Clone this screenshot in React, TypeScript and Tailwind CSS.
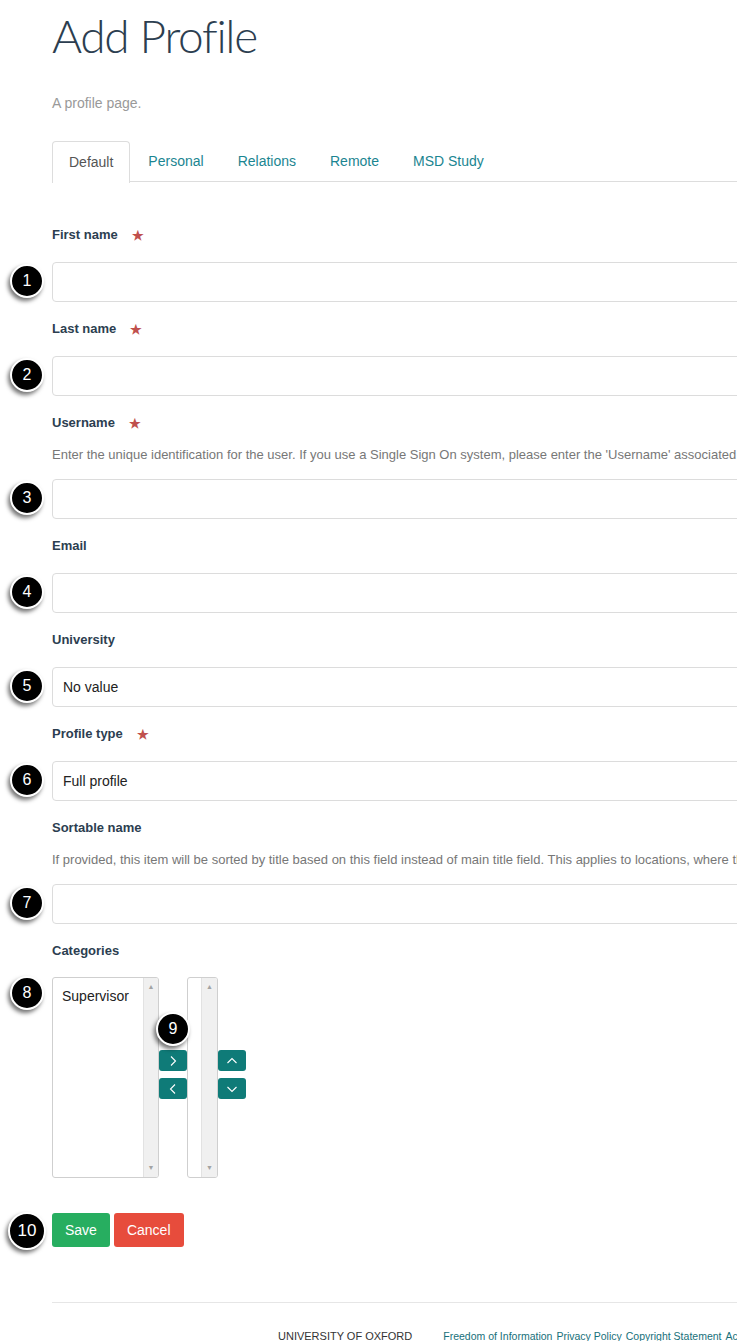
import React from 'react';

const arial = { fontFamily: '"Liberation Sans", Arial, sans-serif' };

const Callout: React.FC<{ n: string; className?: string; big?: boolean }> = ({ n, className = '', big }) => (
  <div
    className={`absolute flex items-center justify-center rounded-full bg-black border-2 border-white text-white shadow-[-2px_3px_4px_rgba(0,0,0,0.55)] ${big ? 'w-[38px] h-[38px] text-[17px]' : 'w-[34px] h-[34px] text-[16px]'} ${className}`}
  >
    {n}
  </div>
);

const Star = () => <span className="ml-[14px] text-[#c0504d] text-[13px] relative top-[1px]">★</span>;

interface FieldProps {
  label: string;
  required?: boolean;
  help?: string;
  callout: string;
  value?: string;
}

const Field: React.FC<FieldProps> = ({ label, required, help, callout, value }) => (
  <div className="mb-[17px]">
    <div className={`h-[20px] flex items-center text-[13px] font-bold text-[#2c3e50] ${help ? 'mb-[12px]' : 'mb-[17px]'}`}>
      {label}
      {required && <Star />}
    </div>
    {help && <div className="h-[20px] leading-[20px] mb-[14px] text-[13px] text-[#777] whitespace-nowrap">{help}</div>}
    <div className="relative">
      <Callout n={callout} className="left-[-42px] top-[2px]" />
      <div className="h-[40px] w-[900px] border border-[#dcdcdc] rounded-[4px] flex items-center px-[10px] text-[14px] text-[#222]">
        {value}
      </div>
    </div>
  </div>
);

const ScrollTrack: React.FC<{ w: string }> = ({ w }) => (
  <div className={`${w} h-full bg-[#f0f0f0] border-l border-[#e2e2e2] flex flex-col justify-between items-center py-[4px] text-[7px] text-[#a3a3a3]`}>
    <span>▲</span>
    <span>▼</span>
  </div>
);

const TealBtn: React.FC<{ d: string }> = ({ d }) => (
  <div className="w-[28px] h-[21px] bg-[#0f7b78] rounded-[3px] flex items-center justify-center">
    <svg width="12" height="12" viewBox="0 0 12 12" fill="none" stroke="white" strokeWidth="1.1">
      <path d={d} />
    </svg>
  </div>
);

export default function App() {
  const tabs = ['Default', 'Personal', 'Relations', 'Remote', 'MSD Study'];
  return (
    <div className="w-[737px] h-[1341px] overflow-hidden bg-white" style={arial}>
      <div className="w-[1100px] pl-[52px]">
        <h1 className="pt-[6px] h-[66px] text-[46px] leading-[60px] font-light text-[#2c3e50] tracking-[-1.3px]" style={{ fontFamily: 'Lato, "Open Sans", sans-serif' }}>
          Add Profile
        </h1>
        <p className="mt-[27px] text-[14px] leading-[20px] text-[#999]">A profile page.</p>

        <div className="mt-[27px] flex border-b border-[#dddddd] h-[42px]">
          {tabs.map((t, i) => (
            <div
              key={t}
              className={`mr-[2px] px-[16px] h-[42px] flex items-center text-[14px] rounded-t-[4px] ${i === 0 ? 'border border-b-0 border-[#dddddd] bg-white text-[#555] relative top-[1px]' : 'text-[#1b8591]'}`}
            >
              {t}
            </div>
          ))}
        </div>

        <div className="mt-[43px]">
          <Field label="First name" required callout="1" />
          <Field label="Last name" required callout="2" />
          <Field
            label="Username"
            required
            callout="3"
            help="Enter the unique identification for the user. If you use a Single Sign On system, please enter the 'Username' associated with this user in that system."
          />
          <Field label="Email" callout="4" />
          <Field label="University" callout="5" value="No value" />
          <Field label="Profile type" required callout="6" value="Full profile" />
          <Field
            label="Sortable name"
            callout="7"
            help="If provided, this item will be sorted by title based on this field instead of main title field. This applies to locations, where the title may not be the best way to sort."
          />

          <div className="h-[20px] flex items-center text-[13px] font-bold text-[#2c3e50] mb-[16px]">Categories</div>
          <div className="relative flex items-start">
            <Callout n="8" className="left-[-42px] top-[-1px]" />
            <div className="w-[107px] h-[201px] border border-[#cfcfcf] rounded-[3px] flex overflow-hidden">
              <div className="flex-1 pl-[9px] pt-[8px] text-[14px] text-[#222]">Supervisor</div>
              <ScrollTrack w="w-[15px]" />
            </div>
            <div className="flex flex-col gap-[7px] mt-[73px]">
              <TealBtn d="M4 1.5 L8.5 6 L4 10.5" />
              <TealBtn d="M8 1.5 L3.5 6 L8 10.5" />
            </div>
            <div className="w-[31px] h-[201px] border border-[#cfcfcf] rounded-[3px] flex overflow-hidden">
              <div className="flex-1" />
              <ScrollTrack w="w-[16px]" />
            </div>
            <div className="flex flex-col gap-[7px] mt-[73px]">
              <TealBtn d="M1.5 8 L6 3.5 L10.5 8" />
              <TealBtn d="M1.5 4 L6 8.5 L10.5 4" />
            </div>
            <Callout n="9" className="left-[104px] top-[35px]" />
          </div>

          <div className="relative mt-[35px] flex gap-[4px]">
            <Callout n="10" big className="left-[-44px] top-[-1px]" />
            <div className="h-[34px] px-[13px] bg-[#27ae60] rounded-[3px] text-white text-[14px] flex items-center">Save</div>
            <div className="h-[34px] px-[13px] bg-[#e74c3c] rounded-[3px] text-white text-[14px] flex items-center">Cancel</div>
          </div>
        </div>

        <div className="mt-[55px] border-t border-[#e6e6e6] w-[1000px]" />
        <div className="mt-[25px] flex items-end leading-[16px]">
          <span className="ml-[226px] text-[11px] text-[#333]">UNIVERSITY OF OXFORD</span>
          <span className="ml-[31px] text-[10.5px] text-[#17707a] flex gap-[4px]">
            <span>Freedom of Information</span>
            <span>Privacy Policy</span>
            <span>Copyright Statement</span>
            <span>Accessibility Statement</span>
          </span>
        </div>
      </div>
    </div>
  );
}
